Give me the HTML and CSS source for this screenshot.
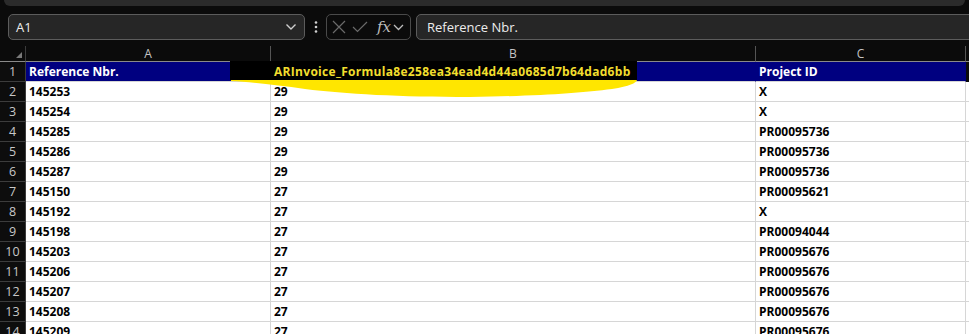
FILE: index.html
```html
<!DOCTYPE html>
<html lang="en">
<head>
    <meta charset="UTF-8">
    <meta name="viewport" content="width=device-width, initial-scale=1.0">
    <title>Sheet</title>
    <link rel="stylesheet" href="styles.css">
</head>
<body>
    <div class="top-bar"></div>

    <div class="formula-bar">
        <div class="name-box">
            <span class="name-value">A1</span>
            <svg class="chevron" width="12" height="8" viewBox="0 0 12 8"><path d="M1.5 1.5 L6 6 L10.5 1.5" fill="none" stroke="#cfcfcf" stroke-width="1.4"/></svg>
        </div>
        <div class="more-dots">
            <svg width="4" height="12" viewBox="0 0 4 12"><circle cx="2" cy="1.5" r="1.3" fill="#d0d0d0"/><circle cx="2" cy="6" r="1.3" fill="#d0d0d0"/><circle cx="2" cy="10.5" r="1.3" fill="#d0d0d0"/></svg>
        </div>
        <div class="fx-box">
            <svg width="14" height="14" viewBox="0 0 14 14"><path d="M1 1 L13 13 M13 1 L1 13" stroke="#6a6a6a" stroke-width="1.2" fill="none"/></svg>
            <svg width="16" height="12" viewBox="0 0 16 12"><path d="M1 6 L5.5 10.5 L15 1" stroke="#6a6a6a" stroke-width="1.2" fill="none"/></svg>
            <span class="fx-label">fx</span>
            <svg class="chevron" width="11" height="7" viewBox="0 0 11 7"><path d="M1 1 L5.5 5.5 L10 1" fill="none" stroke="#bdbdbd" stroke-width="1.3"/></svg>
        </div>
        <div class="formula-input">Reference Nbr.</div>
    </div>

    <div class="sheet">
        <div class="grid">
            <div class="corner"><span class="corner-mark"></span></div>
            <div class="col-head">A</div>
            <div class="col-head">B</div>
            <div class="col-head">C</div>
            <div class="col-head last"></div>

            <div class="row-head">1</div>
            <div class="cell title">Reference Nbr.</div>
            <div class="cell title"><span class="marked">ARInvoice_Formula8e258ea34ead4d44a0685d7b64dad6bb</span></div>
            <div class="cell title">Project ID</div>
            <div class="cell blank"></div>
        </div>
        <div class="grid" id="rows"></div>

        <svg class="highlight" width="969" height="60" viewBox="0 0 969 60">
            <rect x="230" y="15" width="407" height="19" fill="#000"/>
            <path d="M231 34 L637 34 C636 37 630 40 612 43 C580 47 540 50 470 51 C400 51 345 48 305 43 C276 39 250 36 231 35 Z" fill="#ffe600"/>
        </svg>
    </div>

    <script>
        var data = [
            ['145253', '29', 'X'],
            ['145254', '29', 'X'],
            ['145285', '29', 'PR00095736'],
            ['145286', '29', 'PR00095736'],
            ['145287', '29', 'PR00095736'],
            ['145150', '27', 'PR00095621'],
            ['145192', '27', 'X'],
            ['145198', '27', 'PR00094044'],
            ['145203', '27', 'PR00095676'],
            ['145206', '27', 'PR00095676'],
            ['145207', '27', 'PR00095676'],
            ['145208', '27', 'PR00095676'],
            ['145209', '27', 'PR00095676']
        ];
        var rows = document.getElementById('rows');
        data.forEach(function(row, i) {
            var head = document.createElement('div');
            head.className = 'row-head';
            head.textContent = i + 2;
            rows.appendChild(head);
            row.forEach(function(value) {
                var cell = document.createElement('div');
                cell.className = 'cell';
                cell.textContent = value;
                rows.appendChild(cell);
            });
            var blank = document.createElement('div');
            blank.className = 'cell';
            rows.appendChild(blank);
        });
    </script>
</body>
</html>
```

FILE: styles.css
```css
/* Base */
body {
    margin: 0;
    background-color: #0b0b0b;
    font-family: "Open Sans", Arial, sans-serif;
    overflow: hidden;
}

/* Barra superior recortada */
.top-bar {
    height: 6px;
    margin: 0 4px;
    background-color: #2b2b2b;
    border-radius: 0 0 6px 6px;
}

/* Barra de formulas */
.formula-bar {
    display: flex;
    align-items: center;
    margin-top: 8px;
    height: 26px;
    padding-left: 8px;
}

.name-box {
    box-sizing: border-box;
    width: 297px;
    height: 26px;
    display: flex;
    align-items: center;
    justify-content: space-between;
    padding: 0 7px 0 7px;
    background-color: #262626;
    border: 1px solid #5c5c5c;
    border-radius: 5px;
    color: #ececec;
    font-size: 13px;
}

.more-dots {
    width: 21px;
    display: flex;
    justify-content: center;
}

.fx-box {
    box-sizing: border-box;
    width: 85px;
    height: 26px;
    display: flex;
    align-items: center;
    gap: 6px;
    padding: 0 4px 0 5px;
    border: 1px solid #4a4a4a;
    border-radius: 5px;
}

.fx-label {
    font-family: "DejaVu Serif", "Liberation Serif", serif;
    font-style: italic;
    font-size: 15px;
    color: #bdbdbd;
    margin-left: 3px;
    margin-right: -4px;
}

.formula-input {
    box-sizing: border-box;
    flex: 1;
    height: 26px;
    margin-left: 5px;
    margin-right: -10px;
    padding-left: 10px;
    line-height: 24px;
    background-color: #262626;
    border: 1px solid #5c5c5c;
    border-radius: 5px 0 0 5px;
    color: #ececec;
    font-size: 13px;
}

/* Hoja */
.sheet {
    position: relative;
    margin-top: 6px;
}

.grid {
    display: grid;
    grid-template-columns: 26px 245px 485px 210px 1fr;
}

.corner,
.col-head {
    box-sizing: border-box;
    height: 16px;
    border-bottom: 1px solid #8a8a8a;
    background-color: #0b0b0b;
}

.corner {
    position: relative;
    border-right: 1px solid #3c3c3c;
}

.corner-mark {
    position: absolute;
    right: 3px;
    bottom: 3px;
    width: 0;
    height: 0;
    border-left: 6px solid transparent;
    border-bottom: 6px solid #7a7a7a;
}

.col-head {
    border-right: 1px solid #555;
    color: #c4c4c4;
    font-size: 12px;
    line-height: 16px;
    text-align: center;
}

.col-head.last {
    border-right: none;
}

.row-head {
    box-sizing: border-box;
    height: 20px;
    border-right: 1px solid #3c3c3c;
    border-bottom: 1px solid #3c3c3c;
    background-color: #0d0d0d;
    color: #c8c8c8;
    font-size: 12.5px;
    line-height: 19px;
    text-align: center;
}

.cell {
    box-sizing: border-box;
    height: 20px;
    padding-left: 3px;
    border-right: 1px solid #d6d6d6;
    border-bottom: 1px solid #d6d6d6;
    background-color: #fff;
    color: #000;
    font-size: 12px;
    font-weight: bold;
    line-height: 19px;
    white-space: nowrap;
    overflow: hidden;
}

.cell.title {
    background-color: #000080;
    color: #fff;
    border-right-color: #000080;
    border-bottom-color: #d6d6d6;
}

.cell.blank {
    background-color: #0b0b0b;
    border: none;
}

/* Texto resaltado y marca amarilla encima */
.marked {
    position: relative;
    z-index: 2;
    color: #f2de2e;
    letter-spacing: 0.3px;
}

.highlight {
    position: absolute;
    left: 0;
    top: 0;
    z-index: 1;
    pointer-events: none;
}
```
